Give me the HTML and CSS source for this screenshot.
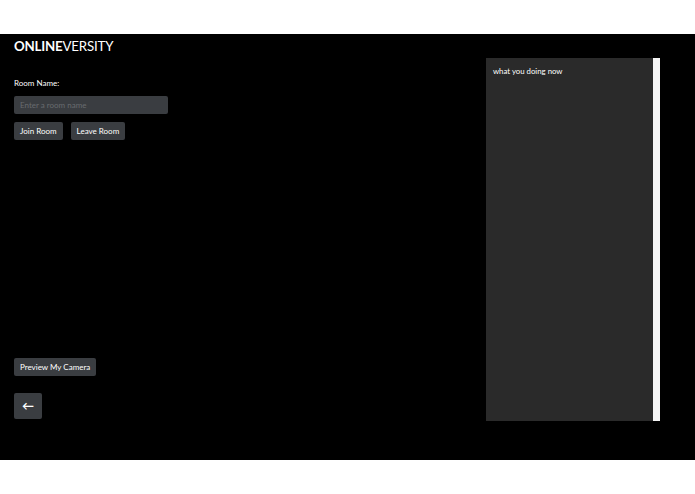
FILE: index.html
```html
<!DOCTYPE html>
<html>
<head>
<meta charset="utf-8">
<link rel="stylesheet" href="styles.css">
</head>
<body>
<div class="top-strip"></div>
<main class="app">
  <section class="left">
    <h1 class="brand"><b>ONLINE</b>VERSITY</h1>
    <label class="label" for="room">Room Name:</label>
    <input id="room" class="room-input" type="text" placeholder="Enter a room name">
    <div class="btn-row">
      <button class="btn">Join Room</button>
      <button class="btn">Leave Room</button>
    </div>
    <button class="btn preview">Preview My Camera</button>
    <button class="btn back">&#8592;</button>
  </section>
  <aside class="chat">
    <div class="chat-body">what you doing now</div>
    <div class="chat-bar"></div>
  </aside>
</main>
<div class="bottom-strip"></div>
</body>
</html>
```
FILE: styles.css
```css
html, body {
  margin: 0;
  padding: 0;
  background: #ffffff;
  font-family: Lato, "Noto Sans", sans-serif;
}
.top-strip { height: 34px; }
.bottom-strip { height: 34px; }
.app {
  height: 426px;
  background: #000000;
  display: grid;
  grid-template-columns: 1fr 174px;
  padding: 0 35px 0 14px;
  box-sizing: border-box;
  color: #ffffff;
}
.left {
  display: flex;
  flex-direction: column;
  align-items: flex-start;
}
.brand {
  margin: 4px 0 0;
  font-size: 13.3px;
  line-height: 17px;
  font-weight: 400;
  letter-spacing: -0.2px;
}
.brand b { font-weight: 700; }
.label {
  margin-top: 23px;
  font-size: 8px;
  line-height: 10px;
}
.room-input {
  margin-top: 8px;
  width: 154px;
  height: 18px;
  box-sizing: border-box;
  background: #3a3d41;
  border: none;
  border-radius: 2px;
  padding: 0 6px;
  font-family: Lato, sans-serif;
  font-size: 8px;
  color: #ffffff;
  outline: none;
}
.room-input::placeholder { color: #686b6f; }
.btn-row {
  margin-top: 8px;
  display: flex;
  gap: 8px;
}
.btn {
  height: 18px;
  padding: 0 6px;
  background: #3a3d41;
  color: #ffffff;
  border: none;
  border-radius: 2px;
  font-family: Lato, sans-serif;
  font-size: 8px;
  line-height: 18px;
}
.preview { margin-top: 218px; }
.back {
  margin-top: 17px;
  width: 28px;
  height: 26px;
  padding: 0;
  font-size: 12px;
  font-weight: 700;
  line-height: 26px;
}
.chat {
  margin-top: 24px;
  height: 363px;
  display: flex;
}
.chat-body {
  flex: 1;
  background: #2a2a2a;
  padding: 8px 7px;
  font-size: 7.8px;
  line-height: 10px;
}
.chat-bar {
  width: 7px;
  background: #f4f4f4;
}
```
